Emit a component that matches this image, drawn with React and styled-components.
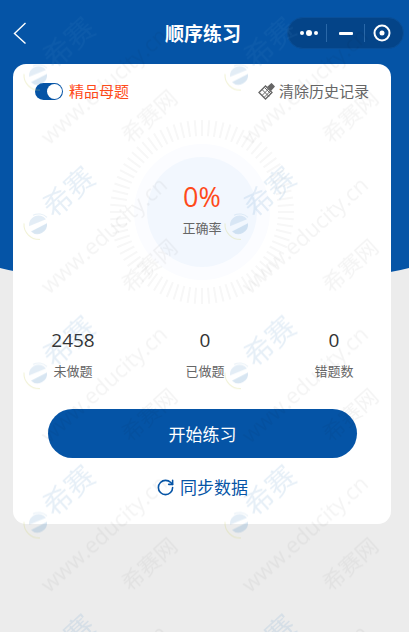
import React from 'react';
import styled, { createGlobalStyle } from 'styled-components';
import { RotateCw } from 'lucide-react';

const GlobalStyle = createGlobalStyle`
  html, body {
    margin: 0;
    padding: 0;
    background: #ececec;
  }
  * {
    box-sizing: border-box;
  }
`;

const blue = '#0554a6';
const orange = '#ff4a1a';
const cjk = '"Noto Sans CJK SC", "Noto Sans", sans-serif';

const Page = styled.div`
  position: relative;
  width: 409px;
  height: 632px;
  overflow: hidden;
  background: #ececec;
  font-family: ${cjk};

  &::before {
    content: '';
    position: absolute;
    top: 0;
    left: -60px;
    width: 529px;
    height: 287px;
    background: ${blue};
    border-radius: 0 0 264px 264px / 0 0 52px 52px;
  }
`;

const Content = styled.div`
  position: relative;
  display: flex;
  flex-direction: column;
  padding: 0 18px 0 13px;
`;

const NavBar = styled.header`
  position: relative;
  height: 64px;
  display: flex;
  align-items: center;
  justify-content: center;
  padding-top: 2px;
`;

const BackButton = styled.svg`
  position: absolute;
  left: 0;
  top: 22px;
  width: 14px;
  height: 22px;
`;

const Title = styled.h1`
  margin: 0;
  font-size: 19px;
  line-height: 26px;
  font-weight: 700;
  color: #fff;
  transform: translateX(1px);
`;

const Capsule = styled.div`
  position: absolute;
  top: 17px;
  right: -13px;
  width: 117px;
  height: 32px;
  display: flex;
  align-items: center;
  border-radius: 16px;
  background: #044488;
  border: 1px solid #0a4f98;
`;

const CapsuleCell = styled.div`
  flex: none;
  width: ${(props) => props.$width}px;
  height: 100%;
  display: flex;
  align-items: center;
  justify-content: center;
  padding-left: ${(props) => props.$left || 0}px;
  padding-right: ${(props) => props.$right || 0}px;
`;

const CapsuleLine = styled.i`
  display: block;
  flex: none;
  width: 1px;
  height: 18px;
  background: #2a68a8;
`;

const Card = styled.main`
  width: 378px;
  height: 460px;
  background: #fff;
  border-radius: 13px;
  display: flex;
  flex-direction: column;
`;

const TopRow = styled.div`
  display: flex;
  align-items: center;
  justify-content: space-between;
  padding: 16px 22px 0 22px;
  height: 38px;
`;

const ToggleWrap = styled.div`
  display: flex;
  align-items: center;
  gap: 6px;
`;

const Toggle = styled.div`
  position: relative;
  width: 28px;
  height: 17px;
  border-radius: 9px;
  background: ${blue};

  &::after {
    content: '';
    position: absolute;
    top: 1px;
    right: 1px;
    width: 15px;
    height: 15px;
    border-radius: 50%;
    background: #fff;
  }
`;

const SmallLabel = styled.span`
  font-size: 15px;
  line-height: 22px;
  color: ${(props) => props.color || '#666'};
`;

const ClearWrap = styled.div`
  display: flex;
  align-items: center;
  gap: 4px;
`;

const Dial = styled.div`
  position: relative;
  margin: 17px auto 0 auto;
  width: 186px;
  height: 186px;
  display: flex;
  flex-direction: column;
  align-items: center;
`;

const DialArt = styled.svg`
  position: absolute;
  left: 0;
  top: 0;
  width: 186px;
  height: 186px;
`;

const Percent = styled.div`
  position: relative;
  margin-top: 58px;
  font-family: "Open Sans", "Noto Sans", sans-serif;
  font-size: 27px;
  line-height: 40px;
  color: ${orange};
`;

const PercentLabel = styled.div`
  position: relative;
  margin-top: 1px;
  font-size: 13px;
  line-height: 20px;
  color: #666;
`;

const Stats = styled.div`
  display: grid;
  grid-template-columns: 132px 129px 60px;
  padding: 23px 0 0 30px;
`;

const Stat = styled.div`
  width: 60px;
  display: flex;
  flex-direction: column;
  align-items: center;
  gap: 9px;
`;

const StatValue = styled.div`
  font-family: "Open Sans", "Noto Sans", sans-serif;
  font-size: 19px;
  line-height: 24px;
  color: #333;
`;

const StatLabel = styled.div`
  font-size: 13px;
  line-height: 20px;
  color: #666;
`;

const StartButton = styled.button`
  display: block;
  margin: 28px 0 0 35px;
  width: 309px;
  height: 49px;
  border: none;
  border-radius: 25px;
  background: ${blue};
  color: #fff;
  font-family: ${cjk};
  font-size: 17px;
`;

const SyncRow = styled.div`
  margin-top: 16px;
  display: flex;
  align-items: center;
  justify-content: center;
  gap: 5px;
  color: ${blue};
  font-size: 17px;
  line-height: 26px;
`;

const Watermark = styled.svg`
  position: absolute;
  left: 0;
  top: 0;
  width: 409px;
  height: 632px;
  pointer-events: none;
`;

const BrushIcon = () => (
  <svg width="17" height="17" viewBox="0 0 17 17" fill="none" stroke="#666" strokeWidth="1.3">
    <path d="M1 9.5 L7.5 3 L14 9.5 L7.5 16 Z" />
    <path d="M4 6.5 L11 13.5 M6.5 4.5 L13 11 M4 12.5 L10.5 6 M6 14.5 L12.5 8" strokeWidth="1" />
    <path d="M10 4 L13.5 0.8 L16.2 3.5 L13 7 Z" fill="#666" />
  </svg>
);

const DialDrawing = () => {
  const ticks = [];
  for (let i = 0; i < 80; i += 1) {
    const a = (i * 4.5 * Math.PI) / 180;
    ticks.push(
      <line
        key={i}
        x1={93 + 76 * Math.cos(a)}
        y1={93 + 76 * Math.sin(a)}
        x2={93 + 92 * Math.cos(a)}
        y2={93 + 92 * Math.sin(a)}
      />
    );
  }
  return (
    <DialArt viewBox="0 0 186 186">
      <g stroke="#f7f7f7" strokeWidth="2">{ticks}</g>
      <circle cx="93" cy="93" r="68" fill="#fbfcff" />
      <circle cx="93" cy="93" r="55" fill="#f2f7fe" />
    </DialArt>
  );
};

const WatermarkLayer = () => (
  <Watermark viewBox="0 0 409 632">
    <defs>
      <pattern id="wm" width="201" height="149.3" patternUnits="userSpaceOnUse">
        <g fontFamily={cjk}>
          <path d="M29 77 A9.5 9.5 0 0 1 46 70 Z" fill="rgba(60,130,190,0.14)" />
          <path d="M31 82 L47 74 A9.5 9.5 0 0 1 31 82 Z" fill="rgba(60,130,190,0.2)" />
          <path d="M33 66 A12 12 0 0 1 47 68" fill="none" stroke="rgba(60,130,190,0.12)" strokeWidth="1" />
          <path d="M24 74 A15 15 0 0 0 40 90" fill="none" stroke="rgba(205,210,110,0.3)" strokeWidth="1" />
          <text
            x="67"
            y="41"
            fontSize="29"
            textAnchor="middle"
            dominantBaseline="central"
            fill="rgba(60,130,190,0.13)"
            transform="rotate(-42 67 41)"
          >
            希赛
          </text>
          <text
            x="103"
            y="85"
            fontSize="22"
            fontFamily="'Open Sans', sans-serif"
            textAnchor="middle"
            dominantBaseline="central"
            fill="rgba(0,0,0,0.045)"
            transform="rotate(-42 103 85)"
          >
            www.educity.cn
          </text>
          <text
            x="148"
            y="115"
            fontSize="22"
            textAnchor="middle"
            dominantBaseline="central"
            fill="rgba(0,0,0,0.045)"
            transform="rotate(-42 148 115)"
          >
            希赛网
          </text>
        </g>
      </pattern>
    </defs>
    <rect width="409" height="632" fill="url(#wm)" />
  </Watermark>
);

const App = () => {
  return (
    <Page>
      <GlobalStyle />
      <Content>
        <NavBar>
          <BackButton viewBox="0 0 14 22" fill="none" stroke="#fff" strokeWidth="1.4">
            <polyline points="12.5,1 1.5,11.5 12.5,21.5" />
          </BackButton>
          <Title>顺序练习</Title>
          <Capsule>
            <CapsuleCell $width={38} $left={4}>
              <svg width="20" height="8" viewBox="0 0 20 8" fill="#fff">
                <circle cx="3" cy="4" r="2" />
                <circle cx="10" cy="4" r="3" />
                <circle cx="17" cy="4" r="2" />
              </svg>
            </CapsuleCell>
            <CapsuleLine />
            <CapsuleCell $width={37}>
              <svg width="14" height="3" viewBox="0 0 14 3" fill="#fff">
                <rect width="14" height="3" rx="1" />
              </svg>
            </CapsuleCell>
            <CapsuleLine />
            <CapsuleCell $width={38} $right={4}>
              <svg width="18" height="18" viewBox="0 0 18 18" fill="none" stroke="#fff" strokeWidth="2">
                <circle cx="9" cy="9" r="7.5" />
                <circle cx="9" cy="9" r="2.5" fill="#fff" stroke="none" />
              </svg>
            </CapsuleCell>
          </Capsule>
        </NavBar>
        <Card>
          <TopRow>
            <ToggleWrap>
              <Toggle />
              <SmallLabel color={orange}>精品母题</SmallLabel>
            </ToggleWrap>
            <ClearWrap>
              <BrushIcon />
              <SmallLabel>清除历史记录</SmallLabel>
            </ClearWrap>
          </TopRow>
          <Dial>
            <DialDrawing />
            <Percent>0%</Percent>
            <PercentLabel>正确率</PercentLabel>
          </Dial>
          <Stats>
            <Stat>
              <StatValue>2458</StatValue>
              <StatLabel>未做题</StatLabel>
            </Stat>
            <Stat>
              <StatValue>0</StatValue>
              <StatLabel>已做题</StatLabel>
            </Stat>
            <Stat>
              <StatValue>0</StatValue>
              <StatLabel>错题数</StatLabel>
            </Stat>
          </Stats>
          <StartButton>开始练习</StartButton>
          <SyncRow>
            <RotateCw size={19} strokeWidth={2} />
            同步数据
          </SyncRow>
        </Card>
      </Content>
      <WatermarkLayer />
    </Page>
  );
};

export default App;
